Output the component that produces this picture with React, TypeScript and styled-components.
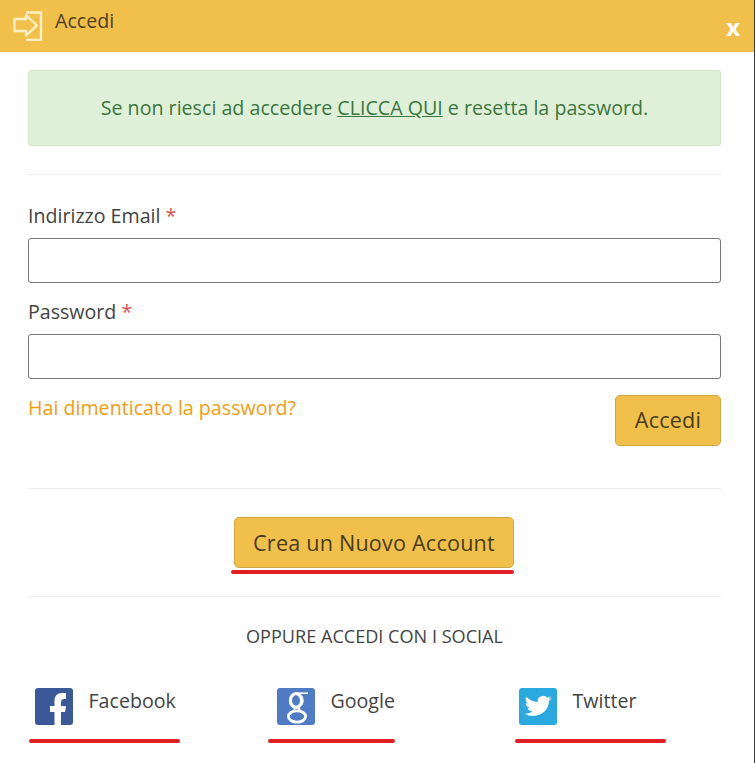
import React from 'react';
import styled, {createGlobalStyle} from 'styled-components';

const GlobalStyle = createGlobalStyle`
    html, body {
        margin: 0;
        padding: 0;
        background: #fff;
    }
    body {
        font-family: "Open Sans", "Liberation Sans", sans-serif;
        color: #404040;
    }
`;

const Modal = styled.div`
    width: 754px;
    height: 763px;
    background: #fff;
    border-right: 1px solid #3a3a3a;
    overflow: hidden;
`;

const Header = styled.div`
    height: 52px;
    background: #f0c04a;
    display: flex;
    align-items: flex-start;
    position: relative;
`;

const HeaderTitle = styled.span`
    font-size: 19.6px;
    line-height: 24px;
    color: #4f4120;
    margin: 9px 0 0 12px;
`;

const Close = styled.span`
    position: absolute;
    right: 14px;
    top: 11px;
    font-size: 24px;
    line-height: 32px;
    font-weight: 700;
    color: #fff;
`;

const Body = styled.div`
    padding: 18px 33px 0 28px;
`;

const Alert = styled.div`
    height: 76px;
    box-sizing: border-box;
    padding-bottom: 2px;
    display: flex;
    align-items: center;
    justify-content: center;
    background: #dff0d8;
    border: 1px solid #d6e9c6;
    border-radius: 3px;
    color: #3c763d;
    font-size: 19.65px;
    a {
        color: inherit;
        text-decoration: underline;
        margin: 0 5px;
    }
`;

const Rule = styled.hr<{$top: number; $bottom: number}>`
    border: 0;
    border-top: 1px solid #eee;
    margin: ${p => p.$top}px 0 ${p => p.$bottom}px;
`;

const Label = styled.label`
    display: block;
    font-size: 19.6px;
    line-height: 22px;
    margin-bottom: 11px;
    color: #444;
    span {
        color: #d9534f;
    }
`;

const Input = styled.input`
    display: block;
    width: 100%;
    height: 45px;
    box-sizing: border-box;
    border: 1px solid #777;
    border-radius: 3px;
    margin-bottom: 18px;
    background: #fff;
`;

const ActionRow = styled.div`
    display: flex;
    justify-content: space-between;
    align-items: flex-start;
    margin-top: -2px;
`;

const ForgotLink = styled.a`
    font-size: 19.65px;
    line-height: 24px;
    color: #f39c12;
    margin-top: 1px;
`;

const Button = styled.button<{$big?: boolean}>`
    font-family: inherit;
    font-weight: 500;
    font-size: 21.6px;
    letter-spacing: 0.2px;
    color: #4a3c1c;
    background: #f0c04a;
    border: 1px solid #d1a843;
    border-radius: 5px;
    padding: 0 0 ${p => (p.$big ? '0' : '2px')};
    width: ${p => (p.$big ? '280px' : '106px')};
    height: 51px;
`;

const Center = styled.div`
    display: flex;
    flex-direction: column;
    align-items: center;
    padding-right: 1px;
`;

const RedLine = styled.div<{$width: number}>`
    width: ${p => p.$width}px;
    height: 4px;
    border-radius: 2px;
    background: #e01e25;
`;

const CreateLine = styled(RedLine)`
    margin: 2px 0 0 -3px;
`;

const SocialTitle = styled.div`
    text-align: center;
    font-size: 18.1px;
    line-height: 20px;
    color: #444;
`;

const SocialRow = styled.div`
    display: grid;
    grid-template-columns: 242px 242px 1fr;
    margin-top: 42px;
    padding-left: 7px;
`;

const SocialItem = styled.div`
    display: flex;
    flex-direction: column;
`;

const SocialLink = styled.a`
    display: flex;
    align-items: flex-start;
    gap: 15.5px;
    font-size: 19.6px;
    line-height: 26px;
    color: #444;
    svg {
        display: block;
        flex: none;
    }
`;

const Underline = styled(RedLine)<{$offset: number}>`
    margin: 14px 0 0 ${p => p.$offset}px;
`;

const IconSlot = styled.span`
    display: block;
    flex: none;
    margin: 11px 0 0 13px;
    svg {
        display: block;
    }
`;

const LoginIcon = () => (
    <IconSlot>
        <svg width="30" height="30" viewBox="0 0 30 30" fill="none" stroke="#fdeec4" strokeWidth="2.4">
            <path d="M13 1.5 H28 V29 H13" />
            <path d="M1.5 8 H13 V4 L24 14.5 L13 24.5 V20 H1.5 Z" fill="#f0c04a" strokeLinejoin="round" />
        </svg>
    </IconSlot>
);

const FacebookIcon = () => (
    <svg width="38" height="37" viewBox="0 0 38 37">
        <rect width="38" height="37" rx="3" fill="#3b5998" />
        <path d="M26 37 V24 H30 L31 18 H26 V14.5 C26 12 27 11 29 11 H31 V5 H27 C22 5 19.5 8 19.5 13 V18 H15 V24 H19.5 V37 Z" fill="#fff" />
    </svg>
);

const GoogleIcon = () => (
    <svg width="38" height="37" viewBox="0 0 38 37" fill="none" stroke="#fff">
        <rect width="38" height="37" rx="3" fill="#4f7cc4" stroke="none" />
        <ellipse cx="19" cy="12.5" rx="5.6" ry="6.8" strokeWidth="3.2" />
        <ellipse cx="20" cy="28.5" rx="8.6" ry="5.6" strokeWidth="2.8" />
        <path d="M19 5.2 H31" strokeWidth="1.6" />
        <path d="M24 8 C27 12 25.5 15.5 23 17.5 C21 19 21 20.5 23 22" strokeWidth="2.4" />
        <path d="M18 19.5 C16.8 20.5 17 22 18.5 23" strokeWidth="1.6" />
    </svg>
);

const TwitterIcon = () => (
    <svg width="38" height="37" viewBox="0 0 38 37">
        <rect width="38" height="37" rx="3" fill="#2aa9e0" />
        <path transform="translate(5.5 5.5) scale(1.13 1.03)" fill="#fff" d="M23.95 4.57a10 10 0 0 1-2.82.77 4.96 4.96 0 0 0 2.16-2.72c-.95.55-2 .96-3.12 1.19a4.92 4.92 0 0 0-8.38 4.48C7.69 8.1 4.07 6.13 1.64 3.16a4.82 4.82 0 0 0-.66 2.47c0 1.71.87 3.21 2.19 4.1a4.9 4.9 0 0 1-2.23-.61v.06c0 2.39 1.7 4.38 3.95 4.83a5 5 0 0 1-2.21.09 4.94 4.94 0 0 0 4.6 3.42A9.87 9.87 0 0 1 0 19.54a14 14 0 0 0 7.56 2.21c9.05 0 14-7.5 14-13.98 0-.21 0-.42-.02-.63a9.94 9.94 0 0 0 2.41-2.57z" />
    </svg>
);

export default function App() {
    return (
        <>
            <GlobalStyle />
            <Modal>
                <Header>
                    <LoginIcon />
                    <HeaderTitle>Accedi</HeaderTitle>
                    <Close>x</Close>
                </Header>
                <Body>
                    <Alert>
                        Se non riesci ad accedere <a href="#">CLICCA QUI</a> e resetta la password.
                    </Alert>
                    <Rule $top={28} $bottom={30} />
                    <Label>Indirizzo Email <span>*</span></Label>
                    <Input type="text" />
                    <Label>Password <span>*</span></Label>
                    <Input type="password" />
                    <ActionRow>
                        <ForgotLink>Hai dimenticato la password?</ForgotLink>
                        <Button>Accedi</Button>
                    </ActionRow>
                    <Rule $top={42} $bottom={28} />
                    <Center>
                        <Button $big>Crea un Nuovo Account</Button>
                        <CreateLine $width={283} />
                    </Center>
                    <Rule $top={22} $bottom={29} />
                    <SocialTitle>OPPURE ACCEDI CON I SOCIAL</SocialTitle>
                    <SocialRow>
                        <SocialItem>
                            <SocialLink><FacebookIcon /><span>Facebook</span></SocialLink>
                            <Underline $width={151} $offset={-6} />
                        </SocialItem>
                        <SocialItem>
                            <SocialLink><GoogleIcon /><span>Google</span></SocialLink>
                            <Underline $width={127} $offset={-9} />
                        </SocialItem>
                        <SocialItem>
                            <SocialLink><TwitterIcon /><span>Twitter</span></SocialLink>
                            <Underline $width={151} $offset={-4} />
                        </SocialItem>
                    </SocialRow>
                </Body>
            </Modal>
        </>
    );
}
